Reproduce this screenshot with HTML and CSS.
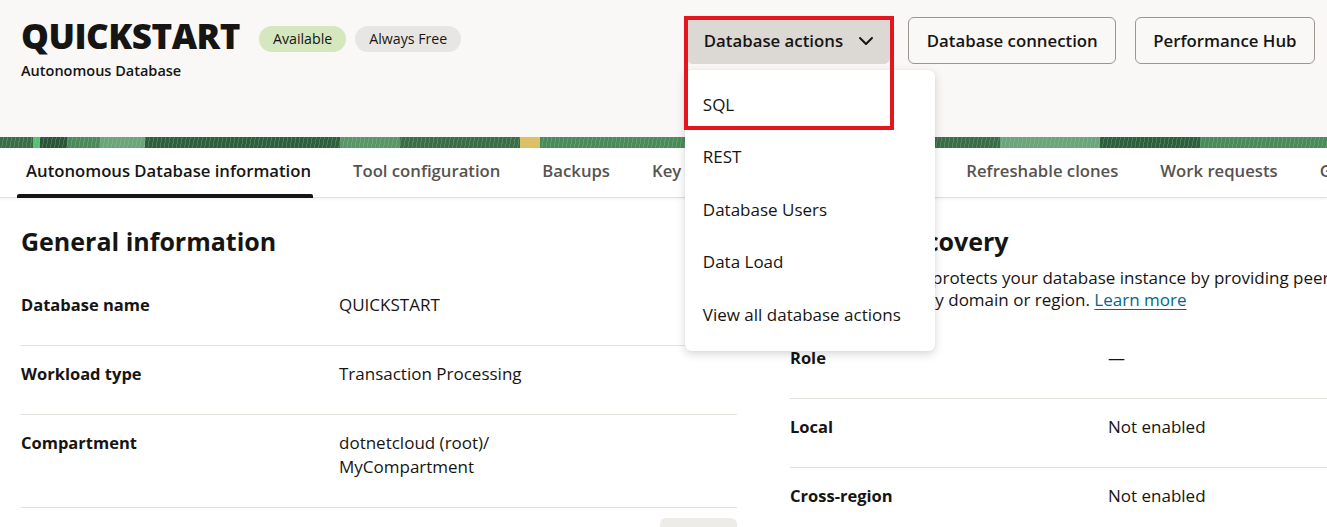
FILE: index.html
```html
<!DOCTYPE html>
<html lang="en">
<head>
<meta charset="utf-8">
<title>QUICKSTART - Autonomous Database</title>
<link rel="stylesheet" href="styles.css">
</head>
<body>
<header class="page-header">
  <div class="title-block">
    <div class="title-row">
      <h1>QUICKSTART</h1>
      <span class="badge badge-ok">Available</span>
      <span class="badge">Always Free</span>
    </div>
    <div class="subtitle">Autonomous Database</div>
  </div>
  <div class="actions">
    <div class="menu-wrap">
      <button class="btn btn-active"><span>Database actions</span>
        <svg class="chev" width="16" height="10" viewBox="0 0 16 10"><path d="M2 2 L8 8 L14 2" fill="none" stroke="#161513" stroke-width="2" stroke-linecap="round" stroke-linejoin="round"/></svg>
      </button>
      <div class="menu">
        <div class="menu-item">SQL</div>
        <div class="menu-item">REST</div>
        <div class="menu-item">Database Users</div>
        <div class="menu-item">Data Load</div>
        <div class="menu-item">View all database actions</div>
      </div>
      <div class="highlight"></div>
    </div>
    <button class="btn">Database connection</button>
    <button class="btn">Performance Hub</button>
  </div>
</header>
<div class="banner"></div>
<nav class="tabs">
  <div class="tab active">Autonomous Database information</div>
  <div class="tab">Tool configuration</div>
  <div class="tab">Backups</div>
  <div class="tab">Key management</div>
  <div class="tab">Monitoring</div>
  <div class="tab">Refreshable clones</div>
  <div class="tab">Work requests</div>
  <div class="tab">Graph Studio</div>
</nav>
<main class="content">
  <section class="col col-left">
    <h2>General information</h2>
    <div class="info-list">
      <div class="row"><div class="label">Database name</div><div class="value">QUICKSTART</div></div>
      <div class="row"><div class="label">Workload type</div><div class="value">Transaction Processing</div></div>
      <div class="row"><div class="label">Compartment</div><div class="value">dotnetcloud (root)/<br>MyCompartment</div></div>
      <div class="row row-ocid"><div class="label">OCID</div><div class="value">ocid1.autonomousdatabase...hbqlxq</div><span class="copy">Copy</span></div>
    </div>
  </section>
  <section class="col col-right">
    <h2>Disaster recovery</h2>
    <p class="desc">Disaster recovery protects your database instance by providing peer databases in a new availability domain or region. <a href="#">Learn more</a></p>
    <div class="info-list">
      <div class="row"><div class="label">Role</div><div class="value">—</div></div>
      <div class="row"><div class="label">Local</div><div class="value">Not enabled</div></div>
      <div class="row"><div class="label">Cross-region</div><div class="value">Not enabled</div></div>
    </div>
  </section>
</main>
</body>
</html>
```
FILE: styles.css
```css
* { box-sizing: border-box; }
body {
  margin: 0;
  width: 1327px;
  height: 527px;
  overflow: hidden;
  font-family: "Open Sans", "Liberation Sans", sans-serif;
  color: #161513;
  background: #fff;
}
.page-header {
  background: #f9f8f6;
  height: 137px;
  display: flex;
  justify-content: space-between;
  padding: 17px 12px 0 21px;
}
.title-row {
  display: flex;
  align-items: flex-start;
}
h1 {
  margin: 0 19px 0 0;
  font-size: 35px;
  line-height: 38px;
  font-weight: 800;
  letter-spacing: -0.5px;
}
.badge {
  margin-top: 9px;
  margin-right: 9px;
  height: 26px;
  line-height: 26px;
  padding: 0 14px;
  border-radius: 13px;
  background: #e8e6e3;
  font-size: 14.2px;
}
.badge-ok { background: #d4e7bf; }
.subtitle {
  margin-top: 6px;
  font-size: 14.5px;
  line-height: 20px;
  font-weight: 600;
}
.actions {
  display: flex;
  align-items: flex-start;
  gap: 18.5px;
}
.btn {
  height: 47px;
  padding: 0 17.5px;
  border: 1px solid #9b968f;
  border-radius: 6px;
  background: transparent;
  font-family: inherit;
  font-size: 16.8px;
  font-weight: 600;
  color: #161513;
  white-space: nowrap;
}
.menu-wrap { position: relative; }
.btn-active {
  display: flex;
  align-items: center;
  justify-content: space-between;
  width: 203px;
  padding: 0 15px 0 16px;
  background: #dcd8d4;
  border-color: #dcd8d4;
}
.chev { flex: none; }
.menu {
  position: absolute;
  left: -2px;
  top: 53px;
  width: 250px;
  padding: 8px 0 10px;
  background: #fff;
  border-radius: 6px;
  box-shadow: 0 3px 10px rgba(0, 0, 0, 0.16), 0 0 1px rgba(0, 0, 0, 0.12);
  z-index: 10;
}
.menu-item {
  height: 52.5px;
  display: flex;
  align-items: center;
  padding-left: 18px;
  font-size: 17px;
}
.highlight {
  position: absolute;
  left: -3px;
  top: -1px;
  width: 210px;
  height: 114px;
  border: 4px solid #e3161e;
  z-index: 20;
}
.banner {
  height: 11px;
  background:
    repeating-linear-gradient(100deg, rgba(255,255,255,0) 0 3px, rgba(160,210,170,0.25) 3px 4px),
    linear-gradient(90deg, #3b6c48 0 33px, #4fc474 33px 40px, #2c5538 40px 67px, #4b8a5a 67px 100px, #6da57b 100px 145px, #2f5e3c 145px 340px, #5a9667 340px 400px, #3b6c48 400px 520px, #e0c060 520px 540px, #4b8a5a 540px 700px, #2c5538 700px 800px, #5a9667 800px 900px, #3b6c48 900px 1000px, #6da57b 1000px 1100px, #2f5e3c 1100px 1200px, #4b8a5a 1200px);
}
.tabs {
  height: 50px;
  display: flex;
  gap: 31px;
  padding-left: 17px;
  background: #fff;
  border-bottom: 1px solid #e4e1dd;
  box-shadow: 0 1px 3px rgba(0, 0, 0, 0.06);
  white-space: nowrap;
}
.tab {
  position: relative;
  display: flex;
  align-items: center;
  padding: 0 2px 4px 9px;
  font-size: 16.7px;
  font-weight: 600;
  color: #57534f;
}
.tab.active { color: #161513; }
.tab.active::after {
  content: "";
  position: absolute;
  left: 0;
  right: 0;
  bottom: -1px;
  height: 4px;
  background: #161513;
  border-radius: 2px 2px 0 0;
}
.content {
  display: flex;
  gap: 53px;
  padding: 25px 0 0 21px;
}
.col { width: 716px; flex: none; }
h2 {
  margin: 0;
  font-size: 25px;
  line-height: 36px;
  font-weight: 700;
}
.col-left .info-list { margin-top: 18px; }
.desc {
  max-width: 630px;
  margin: 8px 0 19px;
  font-size: 17px;
  line-height: 22px;
}
.desc a {
  color: #00688c;
  text-underline-offset: 3px;
}
.row {
  display: grid;
  grid-template-columns: 318px 1fr auto;
  padding: 16px 0 28px;
  border-bottom: 1px solid #e4e1dd;
  font-size: 17px;
  line-height: 24px;
}
.label { font-weight: 700; font-size: 16.5px; }
.copy {
  margin-top: -6px;
  height: 36px;
  width: 77px;
  border-radius: 6px;
  background: #eeece9;
  text-align: center;
  line-height: 36px;
  font-weight: 600;
}
```
